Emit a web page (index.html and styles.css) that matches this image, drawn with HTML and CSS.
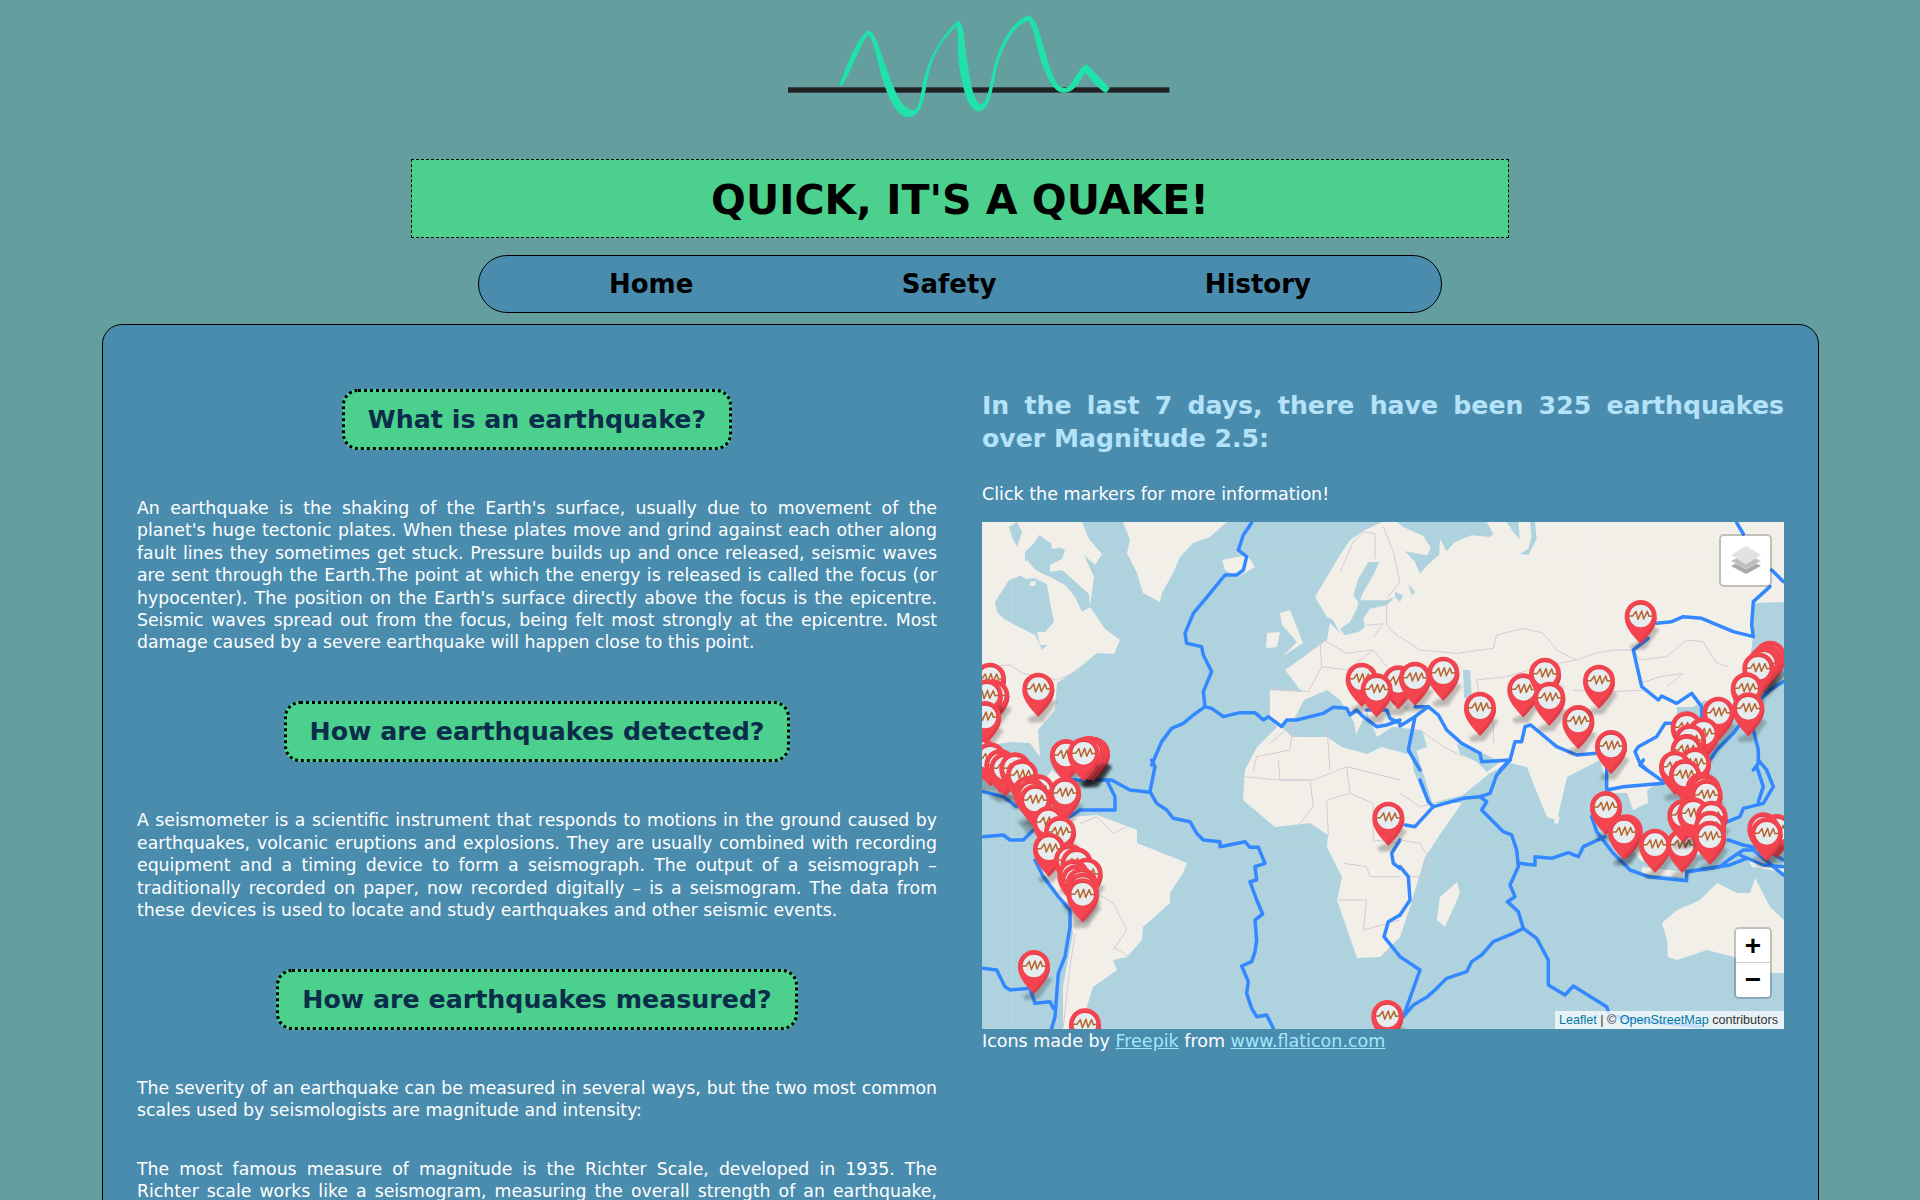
FILE: index.html
```html
<!DOCTYPE html>
<html lang="en">

<head>
    <meta charset="UTF-8">
    <title>Quick, it's a quake!</title>
    <link rel="stylesheet" href="styles.css">
</head>

<body>
    <div class="logo">
        <svg width="440" height="130" viewBox="0 0 1320 390">
            <rect class="logo_line" x="84" y="262" width="1144" height="16"></rect>
            <path class="logo_wave" d="M238 254 C262 205 285 120 326 92 C346 95 362 170 400 262 C415 300 435 332 462 332 C478 330 482 290 490 250 C505 170 560 90 595 63 C612 70 610 130 622 195 C630 260 645 312 662 315 C680 310 685 280 695 240 C710 140 760 60 805 48 C830 55 835 100 853 150 C868 210 885 262 915 266 C940 262 955 200 980 194 L1048 264 L1038 278 C1015 265 990 235 975 215 C960 240 945 278 910 277 C880 275 865 235 846 190 C828 130 820 70 803 60 C765 75 725 130 705 220 C695 280 685 330 655 333 C625 330 610 270 599 195 C592 140 598 90 590 76 C560 105 520 150 505 220 C490 290 490 345 445 351 C410 350 385 290 368 235 C350 170 340 110 324 104 C298 135 272 215 246 255 Z"></path>
        </svg>
    </div>

    <h1 class="title">QUICK, IT'S A QUAKE!</h1>

    <nav class="nav">
        <a href="#">Home</a>
        <a href="#">Safety</a>
        <a href="#">History</a>
    </nav>

    <main class="panel">
        <section class="info">
            <h2 class="pill">What is an earthquake?</h2>
            <p>An earthquake is the shaking of the Earth's surface, usually due to movement of the planet's huge tectonic plates. When these plates move and grind against each other along fault lines they sometimes get stuck. Pressure builds up and once released, seismic waves are sent through the Earth.The point at which the energy is released is called the focus (or hypocenter). The position on the Earth's surface directly above the focus is the epicentre. Seismic waves spread out from the focus, being felt most strongly at the epicentre. Most damage caused by a severe earthquake will happen close to this point.</p>

            <h2 class="pill">How are earthquakes detected?</h2>
            <p>A seismometer is a scientific instrument that responds to motions in the ground caused by earthquakes, volcanic eruptions and explosions. They are usually combined with recording equipment and a timing device to form a seismograph. The output of a seismograph – traditionally recorded on paper, now recorded digitally – is a seismogram. The data from these devices is used to locate and study earthquakes and other seismic events.</p>

            <h2 class="pill">How are earthquakes measured?</h2>
            <p class="intro">The severity of an earthquake can be measured in several ways, but the two most common scales used by seismologists are magnitude and intensity:</p>
            <p class="cut">The most famous measure of magnitude is the Richter Scale, developed in 1935. The Richter scale works like a seismogram, measuring the overall strength of an earthquake,</p>
        </section>

        <section class="quakes">
            <h3 class="count">In the last 7 days, there have been 325 earthquakes over Magnitude 2.5:</h3>
            <p class="hint">Click the markers for more information!</p>
            <div class="map">
                <svg class="map_svg" width="802" height="507" viewBox="0 0 802 507">
                    <defs>
                        <filter id="blur" x="-50%" y="-50%" width="200%" height="200%">
                            <feGaussianBlur stdDeviation="5"></feGaussianBlur>
                        </filter>
                        <g id="pin">
                            <path class="pin_shadow" d="M-34 6 L-6 -8 L28 -58 L56 -44 L14 16 L-26 18 Z" filter="url(#blur)"></path>
                            <path class="pin_body" d="M0 0 C-28 -28 -50 -56 -48 -84 A48 48 0 0 1 48 -84 C50 -56 28 -28 0 0 Z"></path>
                            <path class="pin_side" d="M0 0 C28 -28 50 -56 48 -84 C44 -62 24 -40 -6 -7 Z"></path>
                            <circle class="pin_rim" cx="0" cy="-86" r="36"></circle>
                            <circle class="pin_face" cx="0" cy="-84" r="34"></circle>
                            <path class="pin_line" d="M-36 -84 L-24 -84 L-14 -98 L-8 -74 L3 -99 L9 -75 L20 -98 L25 -83 L36 -84"></path>
                        </g>
                    </defs>

                    <rect class="sea" width="802" height="507"></rect>

                    <!-- land, in map pixels -->
                    <polygon class="land" points="0,0 100,0 107,17 120,32 113,43 102,33 112,55 108,85 123,107 138,118 132,132 115,131 98,145 75,161 73,188 56,208 58,235 48,221 30,220 8,223 20,236 30,240 38,262 62,258 70,248 85,262 76,272 60,272 62,282 88,295 70,300 58,300 40,280 15,265 0,245"></polygon>
                    <polygon class="land" points="141,0 245,0 228,15 211,21 198,35 191,51 180,71 178,80 161,71 155,51 145,31 148,18"></polygon>
                    <polygon class="land" points="88,295 115,293 155,308 155,321 205,341 201,351 188,371 188,381 161,405 160,418 145,435 131,438 135,448 111,465 98,507 81,507 81,465 91,411 86,388 58,348 58,328 71,315"></polygon>
                    <polygon class="land" points="288,195 288,168 320,170 303,148 331,128 345,118 348,101 358,111 351,98 345,95 333,75 358,33 368,18 383,8 400,0 802,0 802,80 771,81 770,101 771,115 768,138 751,165 751,188 738,185 723,178 711,185 695,185 695,201 718,208 725,228 705,241 681,258 665,268 666,281 651,288 645,271 631,271 625,265 621,248 618,238 585,255 575,298 565,295 551,261 545,245 528,241 508,251 481,273 450,281 480,281 461,308 443,335 428,385 418,415 398,435 375,436 355,378 360,355 345,325 346,313 328,301 293,305 261,278 263,248 275,225 295,205"></polygon>
                    <polygon class="land" points="240,38 265,33 273,45 256,55 243,48"></polygon>
                    <polygon class="land" points="298,91 308,88 321,121 300,135 315,120 300,103"></polygon>
                    <polygon class="land" points="285,111 298,110 295,125 284,126"></polygon>
                    <polygon class="land" points="475,360 478,371 463,405 455,398 458,375"></polygon>
                    <polygon class="land" points="573,293 578,295 576,302 572,301"></polygon>
                    <polygon class="land" points="625,295 640,295 665,330 660,340"></polygon>
                    <polygon class="land" points="660,345 705,350 705,355 660,352"></polygon>
                    <polygon class="land" points="695,300 725,295 725,330 700,335"></polygon>
                    <polygon class="land" points="765,335 802,345 802,350 770,345"></polygon>
                    <polygon class="land" points="680,401 695,388 718,378 735,361 755,371 768,371 773,356 788,385 802,398 802,451 785,451 752,435 725,428 695,438 686,435 685,418"></polygon>

                    <!-- inland water -->
                    <polygon class="sea" points="13,80 27,58 43,52 65,62 68,80 72,100 63,110 55,110 58,123 65,123 60,128 53,113 37,105 22,97 15,90"></polygon>
                    <polygon class="sea" points="43,30 53,20 57,13 67,20 83,28 80,37 68,43 68,50 80,48 97,63 107,72 108,85 100,90 93,75 83,63 68,55 57,50 43,40"></polygon>
                    <polygon class="sea" points="27,5 35,0 40,10 35,25 30,15"></polygon>
                    <polygon class="land" points="69,19 76,18 77,26 70,27"></polygon>
                    <polygon class="land" points="40,43 45,38 55,50 58,55 45,57 40,55"></polygon>
                    <polygon class="land" points="48,60 54,59 53,64 48,64"></polygon>
                    <polygon class="sea" points="298,203 312,197 322,178 345,168 358,178 372,200 374,212 385,190 395,215 410,205 440,208 445,225 425,232 400,225 385,232 360,225 345,215 310,215"></polygon>
                    <polygon class="sea" points="425,150 465,152 462,165 430,166"></polygon>
                    <polygon class="sea" points="481,148 488,148 490,178 482,176"></polygon>
                    <polygon class="sea" points="428,226 434,228 450,280 446,282 432,250"></polygon>
                    <polygon class="sea" points="475,222 495,228 518,240 505,250 495,240 478,232"></polygon>
                    <g transform="translate(358 0) scale(.33333)">
                        <polygon class="sea" points="170,0 190,15 250,42 272,78 262,100 195,88 225,120 240,155 262,130 298,98 300,50 320,88 345,60 395,40 450,45 460,35 440,0"></polygon>
                        <polygon class="sea" points="500,0 520,30 540,52 535,0"></polygon>
                        <polygon class="sea" points="570,0 585,0 590,50 565,100 540,95 565,80 575,45"></polygon>
                        <polygon class="sea" points="85,120 118,120 100,160 70,210 60,235 140,235 165,225 140,250 90,260 70,290 75,315 55,330 15,340 0,320 30,300 50,260 55,240 40,220 55,170"></polygon>
                        <polygon class="sea" points="165,210 190,220 180,240 165,225"></polygon>
                        <polygon class="sea" points="205,185 225,210 215,220"></polygon>
                        <polyline class="border" points="0,150 40,60 70,30 105,35 105,110"></polyline>
                        <polyline class="border" points="130,15 160,90 180,180 140,230"></polyline>
                        <polyline class="border" points="140,250 140,310 180,350"></polyline>
                        <polyline class="border" points="80,310 130,305 100,345"></polyline>
                    </g>

                    <!-- tile seams -->
                    <path class="seam" d="M0 32 H802 M0 320 H802 M316 0 V507 M605 0 V507 M30 0 V507"></path>

                    <!-- the rest is in the 3x coordinates of each quarter of the map -->
                    <g transform="translate(-2 -12) scale(.33333)">
                        <polyline class="border" points="985,430 1030,390 1100,430 1180,420 1220,470"></polyline>
                        <polyline class="border" points="1020,395 1025,470 1100,480 1180,420"></polyline>
                        <polyline class="border" points="880,535 985,545 1025,470"></polyline>
                        <polyline class="border" points="8,470 90,465 130,490 230,510 300,480"></polyline>
                        <polyline class="border" points="870,700 940,640 930,720 830,740 820,780"></polyline>
                        <polyline class="border" points="1040,640 1050,780"></polyline>
                        <polyline class="plate" points="815,38 790,75 775,120 800,140 790,180 770,195 735,195 690,250 640,310 615,370 620,400 665,410 670,435 695,485 670,545 675,590 640,615 610,640 575,655 545,695 515,765"></polyline>
                        <polyline class="plate" points="675,590 695,595 730,620 780,608 825,608 850,630 865,620 905,650 920,630 950,630 1030,610 1060,592 1100,595 1110,615 1130,600 1150,620 1190,650 1220,645 1260,630"></polyline>
                        <polyline class="plate" points="1160,600 1220,600 1230,625 1260,640"></polyline>
                    </g>
                    <g transform="translate(418 -12) scale(.33333)">
                        <polyline class="border" points="0,380 60,420 170,430 280,415 290,375 370,355 430,370 470,420 530,450 585,430 640,420 700,420 720,450 800,440 860,390 910,395 950,460 985,470"></polyline>
                        <polyline class="border" points="230,510 320,500 420,470 530,450"></polyline>
                        <polyline class="border" points="720,520 780,500 850,490 800,530"></polyline>
                        <polyline class="border" points="230,510 240,570 280,640 280,700"></polyline>
                        <polyline class="border" points="520,540 640,545 730,540"></polyline>
                        <polyline class="border" points="60,660 130,710 190,740"></polyline>
                        <polyline class="plate" points="1010,38 1030,72"></polyline>
                        <polyline class="plate" points="1115,180 1150,215"></polyline>
                        <polyline class="plate" points="1110,230 1060,275 1055,345 1060,380 1000,365 905,325 850,320 815,335 770,340"></polyline>
                        <polyline class="plate" points="745,385 700,420 725,530 775,570 785,558 830,580 875,550 905,590 905,640"></polyline>
                        <polyline class="plate" points="1150,515 1110,540 1060,590 1000,670 950,720 930,750 920,775"></polyline>
                        <polyline class="plate" points="1060,660 1075,720 1075,760 1060,780"></polyline>
                        <polyline class="plate" points="905,640 795,640 770,680 715,710 705,725 720,760 740,780"></polyline>
                        <polyline class="plate" points="0,648 45,620 85,590 115,615 140,660 185,700 240,730 245,755 330,750 345,695 365,695 375,650 392,645 470,710 530,735 590,730"></polyline>
                        <polyline class="plate" points="45,590 85,590"></polyline>
                        <polyline class="plate" points="45,620 25,720 60,780"></polyline>
                        <polyline class="plate" points="330,750 300,780"></polyline>
                    </g>
                    <g transform="translate(-2 238) scale(.33333)">
                        <polyline class="border" points="795,50 900,60 1000,60 1100,20 1260,60"></polyline>
                        <polyline class="border" points="895,0 900,60 990,60 1000,140 960,190"></polyline>
                        <polyline class="border" points="1100,20 1110,100 1040,120 1045,225"></polyline>
                        <polyline class="border" points="1110,100 1180,130 1180,240 1260,250"></polyline>
                        <polyline class="border" points="1090,310 1160,320 1170,350 1260,350"></polyline>
                        <polyline class="border" points="1075,420 1160,420 1150,510 1260,480"></polyline>
                        <polyline class="border" points="300,190 350,170 400,220 440,200"></polyline>
                        <polyline class="border" points="350,400 400,430 440,510 400,570"></polyline>
                        <polyline class="border" points="285,520 270,620 250,800"></polyline>
                        <polyline class="border" points="400,560 445,590"></polyline>
                        <polyline class="plate" points="515,0 525,20 510,95 530,130 560,150 580,175 630,185 650,220 670,240 720,245 720,260 795,245 810,262 835,262 855,310 825,320 830,360 810,365 830,420 848,462 825,480 830,540 825,575 815,605 785,618 805,665 800,700 815,745 830,770 860,765 880,805"></polyline>
                        <polyline class="plate" points="8,95 70,110 110,140"></polyline>
                        <polyline class="plate" points="8,230 70,225 90,240 130,240 160,210"></polyline>
                        <polyline class="plate" points="240,60 380,60 405,110 405,150 300,150 270,170"></polyline>
                        <polyline class="plate" points="380,60 395,60 450,90 510,97"></polyline>
                        <polyline class="plate" points="165,300 190,350 235,410 270,450 270,500 255,590 235,640 225,770 215,805"></polyline>
                        <polyline class="plate" points="8,625 50,630 75,680 90,690 150,685 165,730 210,725 220,745"></polyline>
                        <polyline class="plate" points="1260,240 1235,280 1240,310 1260,325"></polyline>
                        <polyline class="plate" points="1260,465 1225,485 1212,530 1260,590"></polyline>
                    </g>
                    <g transform="translate(418 238) scale(.33333)">
                        <polyline class="border" points="0,100 60,140 100,130"></polyline>
                        <polyline class="border" points="0,240 60,250 90,300 75,350 25,350"></polyline>
                        <polyline class="plate" points="0,320 25,350 30,420 0,465"></polyline>
                        <polyline class="plate" points="0,590 60,630 10,770"></polyline>
                        <polyline class="plate" points="60,60 85,125 100,140 45,200 15,195"></polyline>
                        <polyline class="plate" points="100,140 190,115 240,110 270,100 290,45 330,0"></polyline>
                        <polyline class="plate" points="240,110 260,125 245,150 310,215 335,225 350,270 355,320 330,375 345,410 322,425 355,455 370,505"></polyline>
                        <polyline class="plate" points="355,310 405,315 405,290 455,295 505,278 535,290 550,260 615,230"></polyline>
                        <polyline class="plate" points="370,505 340,520 280,545 245,585 215,605 200,635 140,655 105,690 80,712 40,735 10,770"></polyline>
                        <polyline class="plate" points="370,505 410,535 445,600 445,675 495,705 520,678 620,740 625,755"></polyline>
                        <polyline class="plate" points="650,770 760,785 900,800"></polyline>
                        <polyline class="plate" points="575,170 590,215 640,280 690,330 745,350 860,362 860,335 960,320 985,300 1030,270 1060,270 1150,345"></polyline>
                        <polyline class="plate" points="860,335 990,315 1040,295"></polyline>
                        <polyline class="plate" points="1020,285 1090,315 1150,320"></polyline>
                        <polyline class="plate" points="620,0 620,90 670,80 790,70"></polyline>
                        <polyline class="plate" points="790,65 720,15 730,0"></polyline>
                        <polyline class="plate" points="1075,0 1100,30 1120,80 1090,130 1030,145 1020,170 970,190"></polyline>
                        <polyline class="plate" points="1070,20 1090,80 1075,125"></polyline>
                        <polyline class="plate" points="985,240 1030,255 1100,270 1150,300"></polyline>
                    </g>

                    <!-- markers -->
                    <g transform="translate(-2 -12) scale(.33333)">
                        <use href="#pin" x="30" y="590"></use>
                        <use href="#pin" x="40" y="640"></use>
                        <use href="#pin" x="20" y="640"></use>
                        <use href="#pin" x="15" y="705"></use>
                        <use href="#pin" x="175" y="620"></use>
                        <use href="#pin" x="1145" y="590"></use>
                        <use href="#pin" x="1255" y="598"></use>
                        <use href="#pin" x="1190" y="622"></use>
                    </g>
                    <g transform="translate(418 -12) scale(.33333)">
                        <use href="#pin" x="722" y="402"></use>
                        <use href="#pin" x="130" y="572"></use>
                        <use href="#pin" x="45" y="587"></use>
                        <use href="#pin" x="240" y="677"></use>
                        <use href="#pin" x="370" y="622"></use>
                        <use href="#pin" x="435" y="575"></use>
                        <use href="#pin" x="448" y="647"></use>
                        <use href="#pin" x="535" y="717"></use>
                        <use href="#pin" x="597" y="596"></use>
                        <use href="#pin" x="633" y="792"></use>
                    </g>
                    <!-- gulf and central america -->
                    <g transform="translate(0 198) scale(.33333)">
                        <use href="#pin" x="-5" y="184"></use>
                        <use href="#pin" x="25" y="199"></use>
                        <use href="#pin" x="55" y="219"></use>
                        <use href="#pin" x="70" y="229"></use>
                        <use href="#pin" x="100" y="229"></use>
                        <use href="#pin" x="120" y="249"></use>
                        <use href="#pin" x="252" y="189"></use>
                        <use href="#pin" x="335" y="184"></use>
                        <use href="#pin" x="335" y="184"></use>
                        <use href="#pin" x="335" y="184"></use>
                        <use href="#pin" x="330" y="182"></use>
                        <use href="#pin" x="330" y="182"></use>
                        <use href="#pin" x="320" y="180"></use>
                        <use href="#pin" x="305" y="184"></use>
                        <use href="#pin" x="170" y="295"></use>
                        <use href="#pin" x="140" y="299"></use>
                        <use href="#pin" x="150" y="309"></use>
                        <use href="#pin" x="249" y="303"></use>
                        <use href="#pin" x="160" y="324"></use>
                    </g>
                    <g transform="translate(-2 238) scale(.33333)">
                        <use href="#pin" x="205" y="270"></use>
                        <use href="#pin" x="240" y="300"></use>
                        <use href="#pin" x="207" y="350"></use>
                        <use href="#pin" x="270" y="384"></use>
                        <use href="#pin" x="290" y="394"></use>
                        <use href="#pin" x="320" y="425"></use>
                        <use href="#pin" x="280" y="430"></use>
                        <use href="#pin" x="290" y="445"></use>
                        <use href="#pin" x="305" y="455"></use>
                        <use href="#pin" x="308" y="470"></use>
                        <use href="#pin" x="308" y="487"></use>
                        <use href="#pin" x="162" y="702"></use>
                        <use href="#pin" x="315" y="877"></use>
                        <use href="#pin" x="1225" y="257"></use>
                        <use href="#pin" x="1222" y="852"></use>
                    </g>
                    <g transform="translate(418 238) scale(.33333)">
                        <use href="#pin" x="618" y="225"></use>
                        <use href="#pin" x="680" y="295"></use>
                        <use href="#pin" x="672" y="300"></use>
                        <use href="#pin" x="765" y="338"></use>
                        <use href="#pin" x="847" y="338"></use>
                    </g>
                    <!-- east asia -->
                    <g transform="translate(638 118) scale(.33333)">
                        <use href="#pin" x="450" y="134"></use>
                        <use href="#pin" x="440" y="144"></use>
                        <use href="#pin" x="430" y="154"></use>
                        <use href="#pin" x="415" y="169"></use>
                        <use href="#pin" x="380" y="229"></use>
                        <use href="#pin" x="385" y="289"></use>
                        <use href="#pin" x="295" y="302"></use>
                        <use href="#pin" x="200" y="346"></use>
                        <use href="#pin" x="250" y="364"></use>
                        <use href="#pin" x="210" y="384"></use>
                        <use href="#pin" x="200" y="414"></use>
                        <use href="#pin" x="225" y="454"></use>
                        <use href="#pin" x="165" y="464"></use>
                        <use href="#pin" x="195" y="489"></use>
                        <use href="#pin" x="245" y="529"></use>
                        <use href="#pin" x="255" y="534"></use>
                        <use href="#pin" x="260" y="549"></use>
                        <use href="#pin" x="190" y="609"></use>
                        <use href="#pin" x="220" y="604"></use>
                        <use href="#pin" x="275" y="614"></use>
                        <use href="#pin" x="270" y="644"></use>
                        <use href="#pin" x="270" y="674"></use>
                        <use href="#pin" x="470" y="654"></use>
                        <use href="#pin" x="430" y="649"></use>
                        <use href="#pin" x="440" y="664"></use>
                    </g>
                </svg>

                <button class="layers" type="button" aria-label="Layers">
                    <svg width="32" height="32" viewBox="0 0 32 32">
                        <path class="layer_low" d="M16 13 L31 21 L16 29 L1 21 Z"></path>
                        <path class="layer_mid" d="M16 8 L31 16 L16 24 L1 16 Z"></path>
                        <path class="layer_top" d="M16 1 L31 10 L16 19 L1 10 Z"></path>
                    </svg>
                </button>
                <div class="zoom">
                    <a href="#">+</a>
                    <a href="#">−</a>
                </div>
                <div class="attrib"><a href="#">Leaflet</a> | © <a href="#">OpenStreetMap</a> contributors</div>
            </div>
            <p class="credit">Icons made by <a href="#">Freepik</a> from <a href="#">www.flaticon.com</a></p>
        </section>
    </main>
</body>

</html>
```

FILE: styles.css
```css
* {
    margin: 0;
    padding: 0;
    box-sizing: border-box;
}

html,
body {
    height: 100%;
    overflow: hidden;
}

body {
    font-family: "DejaVu Sans", "Liberation Sans", sans-serif;
    color: #fff;
    background: #649e9f;
}

a {
    color: inherit;
}

.logo {
    display: flex;
    justify-content: center;
    height: 159px;
    padding-left: 40px;
}

.logo_line {
    fill: #222;
}

.logo_wave {
    fill: #20e2ab;
    stroke: #20e2ab;
    stroke-width: 3;
}

.title {
    width: 1098px;
    height: 79px;
    margin: 0 auto;
    border: 1px dashed #000;
    background: #4bd18d;
    color: #000;
    font-size: 41px;
    line-height: 80px;
    text-align: center;
}

.nav {
    width: 964px;
    height: 58px;
    margin: 17px auto 0;
    padding: 0 130px;
    display: flex;
    justify-content: space-between;
    align-items: center;
    border: 1px solid #000;
    border-radius: 29px;
    background: #4a8cae;
}

.nav a {
    color: #000;
    font-size: 26px;
    font-weight: bold;
    text-decoration: none;
}

.panel {
    width: 1717px;
    min-height: 900px;
    margin: 11px 0 0 102px;
    padding: 64px 34px 0;
    display: grid;
    grid-template-columns: 800px 802px;
    column-gap: 45px;
    border: 1px solid #000;
    border-radius: 20px;
    background: #4a8cae;
}

.info {
    text-align: center;
}

.info p {
    margin-bottom: 47.5px;
    font-size: 17.3px;
    line-height: 22.4px;
    text-align: justify;
}

.info .intro {
    margin-bottom: 36px;
}

.info .cut {
    text-align-last: justify;
}

.pill {
    display: inline-block;
    height: 61px;
    margin-bottom: 47px;
    padding: 0 23px;
    border: 3px dotted #000;
    border-radius: 16px;
    background: #4bd18d;
    color: #0b2c4a;
    font-size: 25.3px;
    line-height: 55px;
}

.count {
    color: #b4e2f8;
    font-size: 25.2px;
    line-height: 33px;
    text-align: justify;
}

.hint {
    margin: 28px 0 17px;
    font-size: 17.5px;
    line-height: 22px;
}

.map {
    position: relative;
    height: 507px;
    overflow: hidden;
}

.map_svg {
    display: block;
}

.sea {
    fill: #aed3df;
}

.land {
    fill: #f2efe9;
}

.seam {
    fill: none;
    stroke: #fff;
    stroke-opacity: .12;
    stroke-width: 1;
}

.border {
    fill: none;
    stroke: #d8c8d4;
    stroke-width: 3;
}

.plate {
    fill: none;
    stroke: #3388ff;
    stroke-width: 10.5;
    stroke-linejoin: round;
    stroke-linecap: round;
}

.pin_shadow {
    fill: #000;
    opacity: .22;
}

.pin_body {
    fill: #f4444f;
}

.pin_side {
    fill: #e03e4a;
}

.pin_rim {
    fill: #e53e4a;
}

.pin_face {
    fill: #e7edef;
}

.pin_line {
    fill: none;
    stroke: #b5652e;
    stroke-width: 4.5;
    stroke-linejoin: round;
}

.layers {
    position: absolute;
    top: 12px;
    right: 12px;
    width: 53px;
    height: 53px;
    display: flex;
    align-items: center;
    justify-content: center;
    border: 2px solid rgba(0, 0, 0, .2);
    border-radius: 5px;
    background: #fff;
    background-clip: padding-box;
}

.layer_low {
    fill: #a9a9a9;
}

.layer_mid {
    fill: #bdbdbd;
    stroke: #eee;
    stroke-width: .5;
}

.layer_top {
    fill: #e2e2e2;
    stroke: #eee;
    stroke-width: .5;
}

.zoom {
    position: absolute;
    right: 12px;
    bottom: 30px;
    width: 38px;
    border: 2px solid rgba(0, 0, 0, .2);
    border-radius: 5px;
    background-clip: padding-box;
}

.zoom a {
    display: block;
    height: 34px;
    background: #fff;
    color: #000;
    font-family: "Liberation Sans", sans-serif;
    font-size: 28px;
    font-weight: bold;
    line-height: 34px;
    text-align: center;
    text-decoration: none;
}

.zoom a:first-child {
    border-bottom: 1px solid #ccc;
    border-radius: 3px 3px 0 0;
}

.zoom a:last-child {
    border-radius: 0 0 3px 3px;
}

.attrib {
    position: absolute;
    right: 0;
    bottom: 0;
    width: 229px;
    height: 18px;
    padding-right: 6px;
    background: rgba(255, 255, 255, .7);
    color: #333;
    font-family: "Liberation Sans", sans-serif;
    font-size: 12.6px;
    line-height: 18px;
    text-align: right;
}

.attrib a {
    color: #0078a8;
    text-decoration: none;
}

.credit {
    font-size: 17.5px;
    line-height: 24px;
}

.credit a {
    color: #a5e6fa;
}
```
